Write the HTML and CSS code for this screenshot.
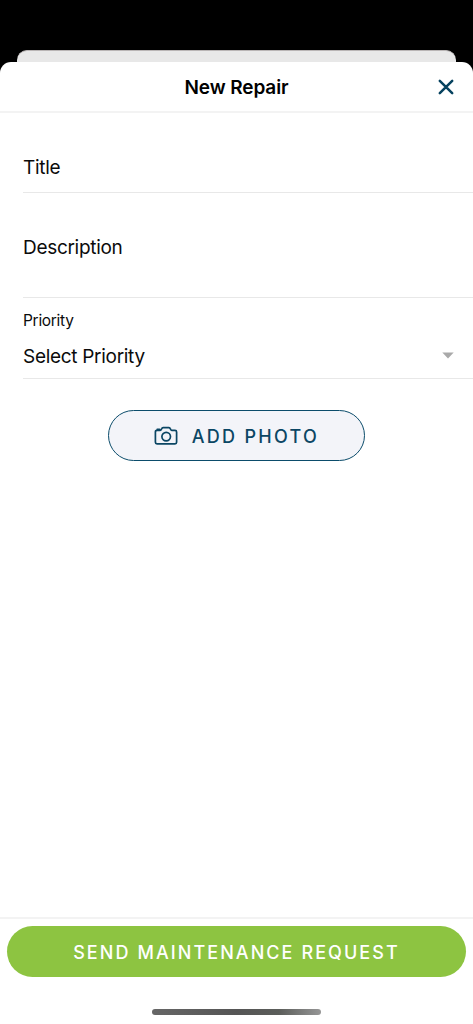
FILE: index.html
```html
<!DOCTYPE html>
<html lang="en">
<head>
<meta charset="utf-8">
<title>New Repair</title>
<link rel="stylesheet" href="styles.css">
</head>
<body>
<div class="screen">
  <div class="back-card"></div>
  <main class="sheet">
    <header class="header">
      <h1 class="heading"><span>New Repair</span></h1>
      <button class="close" aria-label="Close">
        <svg width="16" height="16" viewBox="0 0 16 16"><path d="M1.8 1.8 14.2 14.2M14.2 1.8 1.8 14.2"/></svg>
      </button>
    </header>
    <form class="form">
      <div class="field field-title"><span class="t-title">Title</span></div>
      <div class="field field-description"><span class="t-description">Description</span></div>
      <div class="field field-priority">
        <span class="label">Priority</span>
        <div class="select">
          <span class="t-select">Select Priority</span>
          <svg class="caret" width="12" height="7" viewBox="0 0 12 7"><path d="M.3.5h11.4L6 6.5z"/></svg>
        </div>
      </div>
      <button type="button" class="add-photo">
        <svg class="camera" width="24" height="20" viewBox="0 0 24 20">
          <path d="M3 4.3H6.2Q7 4.3 7.3 3.5L7.7 2.6Q8.1 1.6 9.1 1.6H14.9Q15.9 1.6 16.3 2.6L16.7 3.5Q17 4.3 17.8 4.3H21Q22.6 4.3 22.6 5.9V16.2Q22.6 17.8 21 17.8H3Q1.4 17.8 1.4 16.2V5.9Q1.4 4.3 3 4.3ZM3.2 4V3.3H5.6V4"/>
          <circle cx="12.2" cy="10.6" r="4.3"/>
        </svg>
        <span class="add-photo-text">ADD PHOTO</span>
      </button>
    </form>
    <footer class="footer">
      <button class="send"><span>SEND MAINTENANCE REQUEST</span></button>
      <div class="home-indicator"></div>
    </footer>
  </main>
</div>
</body>
</html>
```
FILE: styles.css
```css
* { box-sizing: border-box; }
body { margin: 0; background: #000; font-family: Inter, "Liberation Sans", sans-serif; color: #0b0b0b; }
button { font: inherit; margin: 0; padding: 0; border: 0; background: none; }
.screen { height: 1024px; padding-top: 50px; display: flex; flex-direction: column; background: #000; overflow: hidden; }
.back-card { height: 12px; flex: none; margin: 0 17px; border-top: 1px solid #b9b5b5; border-radius: 10px 10px 0 0; background: #e8e8e8; }
.sheet { flex: 1; display: flex; flex-direction: column; background: #fff; border-radius: 11px 11px 0 0; }
.header { height: 51px; flex: none; display: grid; grid-template-columns: 54px 1fr 54px; align-items: center; border-bottom: 2px solid #f3f3f3; }
.heading { grid-column: 2; margin: 0; padding-top: 2px; text-align: center; font-size: 19px; line-height: 24px; font-weight: 600; letter-spacing: -0.1px; color: #000; }
.close { justify-self: center; display: flex; }
.close svg { fill: none; stroke: #06425f; stroke-width: 2.5; stroke-linecap: round; }
.form { flex: 1; display: flex; flex-direction: column; }
.field { margin-left: 23px; border-bottom: 1px solid #e8e8e8; font-size: 19px; line-height: 24px; letter-spacing: -0.3px; }
.field-title { height: 80px; padding-top: 43px; }
.field-description { height: 105px; padding-top: 43px; }
.field-priority { height: 81px; padding: 13px 19px 0 0; }
.label { display: block; font-size: 15.5px; line-height: 20px; letter-spacing: -0.3px; }
.select { display: flex; justify-content: space-between; align-items: center; margin-top: 14px; }
.caret { fill: #a9a9a9; margin-bottom: 3px; }
.add-photo { align-self: center; width: 257px; height: 51px; margin-top: 31px; border: 1.5px solid #0b4c6b; border-radius: 26px; background: #f3f4f9; color: #0b4664; display: flex; align-items: center; justify-content: center; gap: 14px; font-size: 18px; font-weight: 500; letter-spacing: 2.3px; }
.add-photo-text { padding-top: 2px; }
.camera { fill: none; stroke: #0b4664; stroke-width: 1.7; stroke-linejoin: round; stroke-linecap: round; }
.footer { height: 107px; flex: none; padding: 7px 7px 0; border-top: 2px solid #f3f3f3; display: flex; flex-direction: column; align-items: center; }
.send { width: 459px; height: 51px; padding-top: 1px; border-radius: 26px; background: #8dc441; color: #fff; font-size: 18px; font-weight: 450; letter-spacing: 2.07px; }
.home-indicator { width: 169px; height: 6px; margin-top: 32px; border-radius: 3px; background: linear-gradient(90deg, #666 0%, #555 50%, #5b5d5a 75%, #969696 100%); }
```
